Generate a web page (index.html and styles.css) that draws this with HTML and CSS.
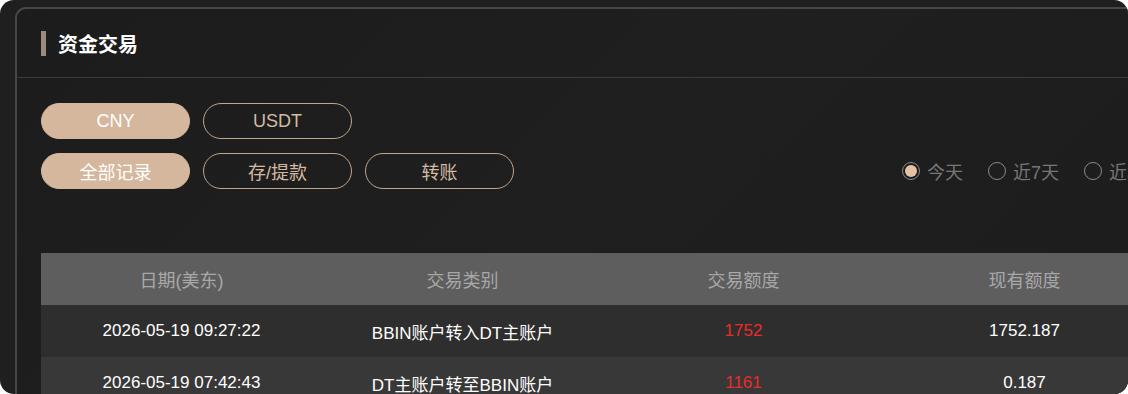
FILE: index.html
```html
<!DOCTYPE html>
<html lang="zh-CN">
<head>
	<meta charset="UTF-8">
	<meta name="viewport" content="width=device-width, initial-scale=1.0">
	<title>资金交易</title>
	<link rel="stylesheet" href="styles.css">
</head>

<body>

	<div class="window">
		<div class="panel">
			<div class="panel-header">
				<span class="accent"></span>
				<h1>资金交易</h1>
			</div>

			<div class="filters">
				<div class="btn-row">
					<button class="pill active">CNY</button>
					<button class="pill">USDT</button>
				</div>
				<div class="btn-row">
					<button class="pill active">全部记录</button>
					<button class="pill">存/提款</button>
					<button class="pill">转账</button>

					<div class="radios">
						<label class="radio checked"><span class="dot"></span>今天</label>
						<label class="radio"><span class="dot"></span>近7天</label>
						<label class="radio"><span class="dot"></span>近30天</label>
					</div>
				</div>
			</div>

			<table class="records">
				<thead>
					<tr>
						<th>日期(美东)</th>
						<th>交易类别</th>
						<th>交易额度</th>
						<th>现有额度</th>
					</tr>
				</thead>
				<tbody>
					<tr>
						<td>2026-05-19 09:27:22</td>
						<td>BBIN账户转入DT主账户</td>
						<td class="amount">1752</td>
						<td>1752.187</td>
					</tr>
					<tr>
						<td>2026-05-19 07:42:43</td>
						<td>DT主账户转至BBIN账户</td>
						<td class="amount">1161</td>
						<td>0.187</td>
					</tr>
				</tbody>
			</table>
		</div>
	</div>

</body>
</html>
```

FILE: styles.css
```css
html,
body {
	margin: 0;
	padding: 0;
	background: #fff;
}

body {
	font-family: 'Liberation Sans', 'Noto Sans CJK SC', sans-serif;
}

.window {
	width: 1128px;
	height: 394px;
	background: #1f1f1f;
	border-radius: 14px;
	overflow: hidden;
	padding: 7px 0 0 15px;
	box-sizing: border-box;
}

.panel {
	width: 1300px;
	height: 600px;
	background: linear-gradient(135deg, #1c1c1c, #1f1f1f 40%, #1b1b1b);
	border-top: 2px solid #474747;
	border-left: 2px solid #474747;
	border-top-left-radius: 11px;
}

.panel-header {
	height: 68px;
	border-bottom: 1px solid #3b3b3b;
	display: flex;
	align-items: center;
	padding-left: 24px;
}

.accent {
	width: 5px;
	height: 25px;
	background: #9c8b7e;
	margin-right: 12px;
}

h1 {
	margin: 0;
	font-size: 20px;
	font-weight: bold;
	color: #fff;
}

.filters {
	padding: 25px 0 0 24px;
	display: flex;
	flex-direction: column;
	gap: 14px;
}

.btn-row {
	display: flex;
	align-items: center;
	gap: 13px;
}

.pill {
	width: 149px;
	height: 36px;
	border-radius: 18px;
	border: 1px solid #c2a68c;
	background: transparent;
	color: #d3bba3;
	font-family: inherit;
	font-size: 18px;
	padding: 0;
}

.pill.active {
	background: #d4b79d;
	border-color: #d4b79d;
	color: #fff;
}

.radios {
	display: flex;
	align-items: center;
	gap: 25px;
	margin-left: 375px;
}

.radio {
	display: flex;
	align-items: center;
	gap: 7px;
	font-size: 18px;
	color: #777;
}

.dot {
	width: 16px;
	height: 16px;
	border: 1.5px solid #8a8a8a;
	border-radius: 50%;
	display: flex;
	align-items: center;
	justify-content: center;
}

.radio.checked .dot::after {
	content: '';
	width: 12px;
	height: 12px;
	border-radius: 50%;
	background: #e4c2a2;
}

.records {
	margin: 64px 0 0 24px;
	border-collapse: collapse;
	table-layout: fixed;
	width: 1124px;
}

.records th,
.records td {
	width: 281px;
	height: 52px;
	padding: 0;
	text-align: center;
	font-size: 17px;
}

.records th {
	background: #5e5e5e;
	color: #a8a8a8;
	font-weight: normal;
	font-size: 18px;
}

.records td {
	color: #fff;
}

.records tbody tr:nth-child(1) {
	background: #2e2e2e;
}

.records tbody tr:nth-child(2) {
	background: #383838;
}

.records td.amount {
	color: #ec2a2a;
}
```
